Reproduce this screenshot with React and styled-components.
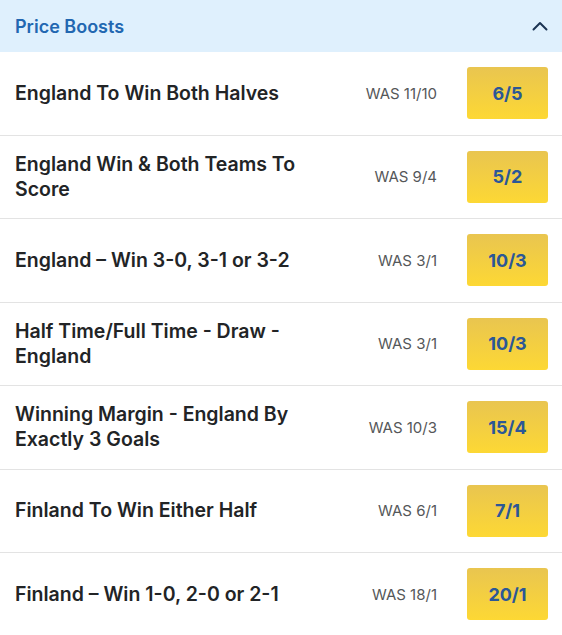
import React, { useState } from "react";
import styled, { createGlobalStyle } from "styled-components";

const GlobalStyle = createGlobalStyle`
  body {
    margin: 0;
    padding: 0;
    background: #ffffff;
    font-family: Inter, "Noto Sans", sans-serif;
    color: #222426;
  }
`;

const Panel = styled.section`
  width: 562px;
  background: #ffffff;
`;

const Header = styled.button`
  display: flex;
  align-items: center;
  justify-content: space-between;
  width: 100%;
  height: 52px;
  padding: 0 14px 0 15px;
  border: none;
  background: #dff0fd;
  cursor: pointer;
  font-family: inherit;
`;

const HeaderTitle = styled.span`
  font-size: 18px;
  font-weight: 600;
  color: #2267b1;
`;

const Chevron = styled.svg`
  width: 16px;
  height: 10px;
  transform: ${(p) => (p.$open ? "none" : "rotate(180deg)")};
`;

const Row = styled.div`
  display: flex;
  align-items: center;
  height: 83.5px;
  padding: 0 14px 0 15px;
  border-bottom: 1px solid #e3e3e3;
  box-sizing: border-box;
`;

const Name = styled.div`
  flex: 1;
  font-size: 19.5px;
  font-weight: 600;
  line-height: 25px;
  color: #222426;
`;

const NameText = styled.span`
  display: block;
  max-width: 300px;
`;

const Was = styled.span`
  font-size: 15px;
  color: #555759;
  white-space: nowrap;
  margin-right: 30px;
`;

const Odds = styled.button`
  width: 81px;
  height: 52px;
  border: none;
  border-radius: 3px;
  background: linear-gradient(180deg, #e9c550 0%, #fdd834 100%);
  color: #2b5797;
  font-family: inherit;
  font-size: 18px;
  font-weight: 700;
  cursor: pointer;
  flex-shrink: 0;
`;

const boosts = [
  { name: "England To Win Both Halves", was: "11/10", odds: "6/5" },
  { name: "England Win & Both Teams To Score", was: "9/4", odds: "5/2" },
  { name: "England – Win 3-0, 3-1 or 3-2", was: "3/1", odds: "10/3" },
  { name: "Half Time/Full Time - Draw - England", was: "3/1", odds: "10/3" },
  { name: "Winning Margin - England By Exactly 3 Goals", was: "10/3", odds: "15/4" },
  { name: "Finland To Win Either Half", was: "6/1", odds: "7/1" },
  { name: "Finland – Win 1-0, 2-0 or 2-1", was: "18/1", odds: "20/1" },
];

export default function App() {
  const [open, setOpen] = useState(true);

  return (
    <>
      <GlobalStyle />
      <Panel>
        <Header onClick={() => setOpen(!open)}>
          <HeaderTitle>Price Boosts</HeaderTitle>
          <Chevron $open={open} viewBox="0 0 16 10">
            <path
              d="M1.5 8.5 L8 2 L14.5 8.5"
              fill="none"
              stroke="#1b3453"
              strokeWidth="2"
              strokeLinecap="round"
              strokeLinejoin="round"
            />
          </Chevron>
        </Header>
        {open &&
          boosts.map((b, i) => (
            <Row key={i}>
              <Name>
                <NameText>{b.name}</NameText>
              </Name>
              <Was>WAS {b.was}</Was>
              <Odds>{b.odds}</Odds>
            </Row>
          ))}
      </Panel>
    </>
  );
}
